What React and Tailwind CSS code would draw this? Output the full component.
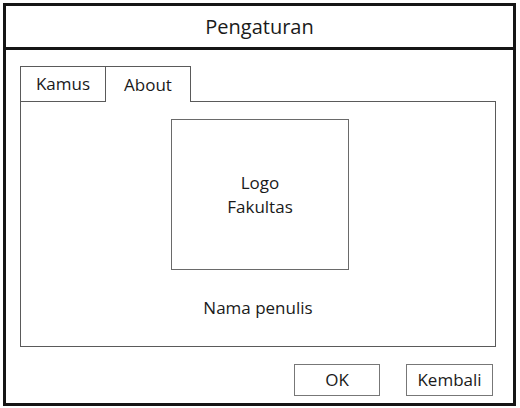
import React from "react";

const font = { fontFamily: '"Open Sans", "Noto Sans", sans-serif' };

const SettingsDialog = () => {
  return (
    <div className="w-[520px] h-[408px] bg-white pt-[3px] pl-[3px] text-[#1a1a1a]" style={font}>
      <div className="w-[513px] h-[403px] border-[3px] border-[#151515] flex flex-col">
        {/* title bar */}
        <div className="h-[44px] border-b-[3px] border-[#151515] flex items-center justify-center text-[20px]">
          Pengaturan
        </div>

        <div className="flex-1 flex flex-col pt-[16px] pl-[14px] pr-[17px]">
          {/* tabs */}
          <div className="flex h-[36px]">
            <div className="w-[86px] border border-[#5a5a5a] flex items-center justify-center text-[17px]">
              Kamus
            </div>
            <div className="w-[85px] border-t border-r border-[#5a5a5a] flex items-center justify-center text-[17px]">
              About
            </div>
            <div className="flex-1 border-b border-[#5a5a5a]" />
          </div>

          {/* about panel */}
          <div className="h-[245px] border-l border-r border-b border-[#5a5a5a] flex flex-col items-center pt-[17px]">
            <div className="w-[178px] h-[151px] ml-[4px] border border-[#6a6a6a] flex flex-col items-center justify-center text-[17px] leading-[24px] text-center">
              <span>Logo</span>
              <span>Fakultas</span>
            </div>
            <div className="mt-[25px] text-[17px]">Nama penulis</div>
          </div>

          {/* actions */}
          <div className="flex justify-end gap-[26px] mt-[17px] pr-[3px]">
            <button className="w-[86px] h-[32px] border border-[#777] text-[17px]">OK</button>
            <button className="w-[87px] h-[32px] border border-[#777] text-[17px]">Kembali</button>
          </div>
        </div>
      </div>
    </div>
  );
};

export default function App() {
  return <SettingsDialog />;
}
